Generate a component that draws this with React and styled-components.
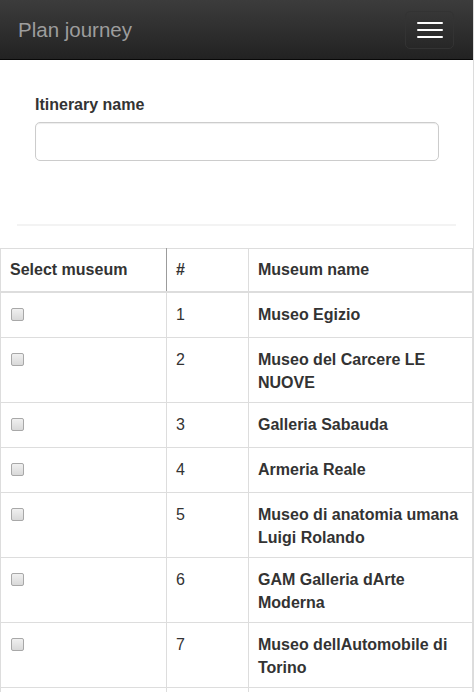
import React from 'react';
import styled, {createGlobalStyle} from 'styled-components';

const GlobalStyle = createGlobalStyle`
  html, body {
    margin:0;
    padding:0;
    background:#fff;
  }
  body {
    font-family:"Liberation Sans", Arial, Helvetica, sans-serif;
    font-size:16px;
    line-height:1.42857;
    color:#333;
  }
`

const Page = styled.div`
  width:473px;
  border-right:1px solid #dcdcdc;
  min-height:692px;
`

const Navbar = styled.nav`
  display:flex;
  justify-content:space-between;
  align-items:flex-start;
  height:59px;
  background-image:linear-gradient(to bottom, #3c3c3c 0, #222 100%);
  border-bottom:1px solid #080808;
`

const Brand = styled.a`
  padding:18px 17px 0 18px;
  font-size:20.5px;
  line-height:23px;
  color:#9d9d9d;
  text-decoration:none;
`

const Toggle = styled.button`
  display:flex;
  flex-direction:column;
  gap:5px;
  margin:11px 19px 0 0;
  padding:10px 10px 10px 11px;
  background:transparent;
  border:1px solid #333;
  border-radius:5px;
  cursor:pointer;
`

const Bar = styled.span`
  display:block;
  width:26px;
  height:2px;
  border-radius:1px;
  background-color:#fff;
`

const Container = styled.div`
  padding:0 17px;
`

const FormGroup = styled.div`
  padding:33px 17px 0 18px;
  margin-bottom:63px;
  label {
    display:block;
    font-weight:bold;
    line-height:23px;
    margin-bottom:6px;
  }
`

const TextInput = styled.input`
  display:block;
  box-sizing:border-box;
  width:100%;
  height:39px;
  padding:6px 13px;
  font-family:inherit;
  font-size:16px;
  color:#555;
  border:1px solid #ccc;
  border-radius:5px;
  box-shadow:inset 0 1px 1px rgba(0,0,0,.075);
  &:focus {
    outline:none;
  }
`

const Rule = styled.hr`
  margin:0 0 22px;
  height:2px;
  border:none;
  background-color:#f3f3f3;
`

const Table = styled.table`
  width:100%;
  table-layout:fixed;
  border-collapse:collapse;
  border:1px solid #ddd;
  th, td {
    border:1px solid #ddd;
    text-align:left;
    vertical-align:top;
    line-height:23px;
  }
  th {
    padding:9px 9px 10px;
    font-weight:bold;
    border-bottom:2px solid #ddd;
  }
  th:first-child {
    border-right:1px solid #9c9c9c;
  }
  td {
    padding:10px 9px 8px;
  }
`

const NameCell = styled.td`
  font-weight:bold;
`

const Check = styled.input`
  appearance:none;
  display:block;
  box-sizing:border-box;
  width:13px;
  height:13px;
  margin:5px 0 8px 1px;
  border:1px solid #a8a8a8;
  border-radius:2px;
  background-image:linear-gradient(to bottom, #f0f0f0, #d9d9d9);
`

const museums = [
  'Museo Egizio',
  'Museo del Carcere LE NUOVE',
  'Galleria Sabauda',
  'Armeria Reale',
  'Museo di anatomia umana Luigi Rolando',
  'GAM Galleria dArte Moderna',
  'Museo dellAutomobile di Torino',
  'Museo Nazionale del Cinema',
  'Palazzo Madama',
];

const App = () => {
  return (
    <Page>
      <GlobalStyle/>
      <Navbar>
        <Brand href="#">Plan journey</Brand>
        <Toggle type="button" aria-label="Toggle navigation">
          <Bar/>
          <Bar/>
          <Bar/>
        </Toggle>
      </Navbar>
      <Container>
        <FormGroup>
          <label htmlFor="itinerary">Itinerary name</label>
          <TextInput id="itinerary" type="text"/>
        </FormGroup>
        <Rule/>
      </Container>
      <Table>
        <colgroup>
          <col style={{width:166}}/>
          <col style={{width:82}}/>
          <col/>
        </colgroup>
        <thead>
          <tr>
            <th>Select museum</th>
            <th>#</th>
            <th>Museum name</th>
          </tr>
        </thead>
        <tbody>
          {museums.map((name, i) => (
            <tr key={name}>
              <td><Check type="checkbox"/></td>
              <td>{i + 1}</td>
              <NameCell>{name}</NameCell>
            </tr>
          ))}
        </tbody>
      </Table>
    </Page>
  )
}

export default App;
